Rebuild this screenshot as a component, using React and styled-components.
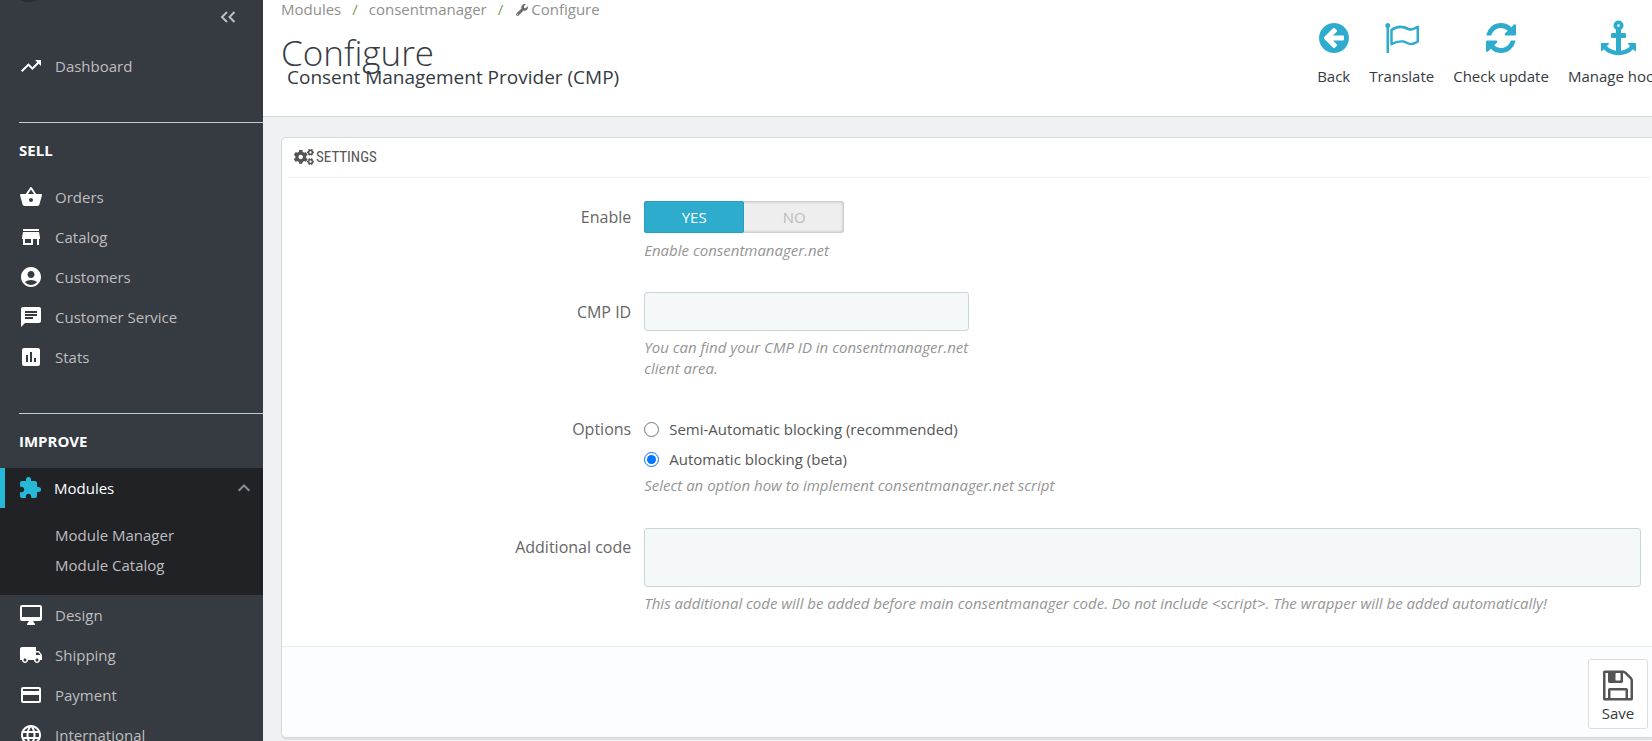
import React from "react";
import styled, { createGlobalStyle, css } from "styled-components";
import {
  MdTrendingUp,
  MdShoppingBasket,
  MdStore,
  MdAccountCircle,
  MdChat,
  MdAssessment,
  MdExtension,
  MdOutlineDesktopMac,
  MdLocalShipping,
  MdPayment,
  MdLanguage,
  MdKeyboardArrowUp,
} from "react-icons/md";
import { FaWrench, FaCogs } from "react-icons/fa";

const GlobalStyle = createGlobalStyle`
  *, *::before, *::after { box-sizing: border-box; }
  body {
    margin: 0;
    background: #eff1f2;
    color: #363a41;
    font-family: "Open Sans", "Noto Sans", sans-serif;
    font-size: 15px;
    line-height: 20px;
  }
`;

const Page = styled.div`
  display: flex;
  height: 100vh;
  overflow: hidden;
`;

/* Sidebar */

const Sidebar = styled.nav`
  flex: none;
  width: 263px;
  overflow: hidden;
  background: #363a41;
`;

const SidebarTop = styled.div`
  display: flex;
  justify-content: space-between;
  align-items: flex-start;
  height: 46px;
  padding: 0 27px 0 19px;
`;

const Avatar = styled.svg`
  display: block;
  width: 20px;
  height: 2px;
`;

const CollapseButton = styled.button`
  display: flex;
  margin: 11px 0 0;
  padding: 0;
  border: 0;
  background: none;
  color: #bebebe;
`;

const NavList = styled.ul`
  margin: 0;
  padding: 0;
  list-style: none;
`;

const NavLink = styled.a`
  display: flex;
  align-items: center;
  gap: 12px;
  height: 40px;
  padding: 0 7px 0 19px;
  color: #bebebe;
  text-decoration: none;

  svg {
    flex: none;
    width: 24px;
    height: 24px;
    color: #fff;
  }

  ${(p) =>
    p.$active &&
    css`
      padding-left: 13px;
      border-left: 5px solid #25b9d7;
      background: #202226;
      color: #fff;
      font-weight: 500;

      svg:first-child {
        color: #25b9d7;
      }
      svg:last-child {
        margin-left: auto;
        color: #8b9197;
      }
    `}
`;

const NavSection = styled.section`
  margin: 36px 0 0 19px;
  border-top: 1px solid #bbcdd2;
`;

const NavTitle = styled.h2`
  margin: 0;
  padding: 17px 0;
  color: #fff;
  font-size: 15px;
  line-height: 20px;
  font-weight: 700;
  text-transform: uppercase;
`;

const SubMenu = styled.ul`
  margin: 0;
  padding: 12px 0 15px 55px;
  background: #202226;
  list-style: none;
`;

const SubLink = styled.a`
  display: block;
  color: #bebebe;
  line-height: 30px;
  text-decoration: none;
`;

/* Header */

const Main = styled.main`
  flex: 1;
  min-width: 0;
  overflow: hidden;
`;

const Header = styled.header`
  display: flex;
  justify-content: space-between;
  height: 117px;
  padding-left: 18px;
  border-bottom: 1px solid #d3d8db;
  background: #fff;
`;

const Breadcrumb = styled.ol`
  display: flex;
  margin: 0;
  padding: 0;
  line-height: 18px;
  list-style: none;

  li + li::before {
    content: "/";
    margin: 0 11px;
    color: #72a35c;
  }
`;

const CrumbLink = styled.a`
  color: #8f8f8f;
  text-decoration: none;

  svg {
    width: 12px;
    height: 12px;
    margin: 0 3px -1px 2px;
    color: #6c6c6c;
  }
`;

const Title = styled.h1`
  margin: 21px 0 0;
  color: #363a41;
  font-size: 35px;
  line-height: 28px;
  font-weight: 300;
`;

const Subtitle = styled.h4`
  margin: 0 0 0 6px;
  font-size: 19px;
  line-height: 20px;
  font-weight: 400;
`;

const Toolbar = styled.div`
  display: flex;
  flex: none;
  gap: 19px;
  margin: 19px -18px 0 0;
`;

const ToolButton = styled.button`
  display: flex;
  flex-direction: column;
  align-items: center;
  align-self: flex-start;
  gap: 9px;
  padding: 0;
  border: 0;
  background: none;
  color: #363a41;
  font: inherit;
  white-space: nowrap;

  svg {
    height: 38px;
    color: #2eacce;
  }
`;

/* Settings panel */

const Panel = styled.form`
  margin: 20px -4px 0 18px;
  border: 1px solid #d3d8db;
  border-radius: 5px;
  background: #fff;
  box-shadow: 0 2px 0 rgba(0, 0, 0, 0.06);
`;

const PanelHeading = styled.h3`
  display: flex;
  align-items: center;
  gap: 2px;
  height: 40px;
  margin: 0 6px 23px;
  padding: 0 6px 2px;
  border-bottom: 1px solid #eee;
  color: #555;
  font-family: "Ubuntu Condensed", "Roboto Condensed", "Open Sans", sans-serif;
  font-size: 15px;
  font-weight: 400;
  text-transform: uppercase;

  svg {
    width: 20px;
    height: 18px;
  }
`;

const Row = styled.div`
  display: grid;
  grid-template-columns: 26% 1fr;
  padding: 0 14px 0 12px;
  margin-bottom: ${(p) => p.$space}px;
`;

const RowLabel = styled.label`
  padding: ${(p) => p.$top}px 13px 0 0;
  color: #666;
  font-size: 16px;
  line-height: 20px;
  text-align: right;
`;

const Help = styled.p`
  margin: ${(p) => p.$top}px 0 0;
  color: #959595;
  font-style: italic;
  line-height: 21px;
`;

const Switch = styled.div`
  display: flex;
  width: 200px;
  height: 32px;
  border-radius: 3px;
  background: #eee;
  box-shadow: inset 0 0 3px 1px rgba(0, 0, 0, 0.2);

  input {
    position: absolute;
    opacity: 0;
  }
`;

const SwitchLabel = styled.label`
  flex: 1;
  border-radius: 3px;
  color: #bbb;
  line-height: 32px;
  text-align: center;

  input:checked + & {
    background: #2eacce;
    box-shadow: inset 0 0 0 1px #2a9dbd;
    color: #fff;
    font-weight: 500;
  }
`;

const field = css`
  display: block;
  width: 100%;
  border: 1px solid #c7d6db;
  border-radius: 3px;
  background: #f5f8f9;
  font: inherit;
`;

const ShortColumn = styled.div`
  max-width: 325px;
`;

const TextInput = styled.input`
  ${field}
  height: 39px;
`;

const TextArea = styled.textarea`
  ${field}
  height: 59px;
  resize: none;
`;

const RadioRow = styled.label`
  display: flex;
  align-items: center;
  gap: 10px;
  height: 30px;
  color: #555;

  input {
    width: 15px;
    height: 15px;
    margin: 0;
    accent-color: #0075ff;
  }
`;

const PanelFooter = styled.footer`
  display: flex;
  justify-content: flex-end;
  height: 91px;
  padding: 12px 7px 8px;
  border-top: 1px solid #e6ebee;
  border-radius: 0 0 5px 5px;
  background: #fcfdfe;
`;

const SaveButton = styled.button`
  display: flex;
  flex-direction: column;
  align-items: center;
  justify-content: center;
  width: 60px;
  height: 70px;
  padding: 2px 0 0;
  border: 1px solid #ddd;
  border-radius: 3px;
  background: #fff;
  color: #363a41;
  font: inherit;

  svg {
    color: #555;
  }
`;

const Glyph = ({ box = "0 0 1536 1792", width = 30, height = 35, d }) => (
  <svg viewBox={box} width={width} height={height} fill="currentColor" aria-hidden="true">
    <path d={d} />
  </svg>
);

const BACK =
  "M1280 960v-128q0-26-19-45t-45-19h-502l189-189q19-19 19-45t-19-45l-91-91q-18-18-45-18t-45 18l-362 362-91 91q-18 18-18 45t18 45l91 91 362 362q18 18 45 18t45-18l91-91q18-18 18-45t-18-45l-189-189h502q26 0 45-19t19-45zm256-64q0 209-103 385.500t-279.500 279.500-385.500 103-385.500-103-279.500-279.500-103-385.500 103-385.500 279.500-279.500 385.500-103 385.500 103 279.500 279.500 103 385.500z";
const FLAG =
  "M1664 1054v-616q-169 91-306 91-82 0-145-32-100-49-184-76.500t-178-27.500q-173 0-403 127v599q245-113 433-113 55 0 103.500 7.500t98 26 77 31 82.500 39.500l28 14q44 22 101 22 120 0 293-92zm-1344-798q0 35-17.500 64t-46.500 46v1266q0 14-9 23t-23 9h-64q-14 0-23-9t-9-23v-1266q-29-17-46.500-46t-17.500-64q0-53 37.500-90.500t90.500-37.500 90.500 37.500 37.500 90.500zm1472 64v763q0 39-35 57-10 5-17 9-218 116-369 116-88 0-158-35l-28-14q-64-33-99-48t-91-29-114-14q-102 0-235.500 44t-228.500 102q-15 9-33 9-16 0-32-8-32-19-32-56v-742q0-35 31-55 35-21 78.500-42.500t114-52 152.500-49.500 155-19q112 0 209 31t209 86q38 19 89 19 122 0 310-112 22-12 31-17 31-16 62 2 31 20 31 55z";
const REFRESH =
  "M1511 1056q0 5-1 7-64 268-268 434.500t-478 166.500q-146 0-282.500-55t-243.500-157l-129 129q-19 19-45 19t-45-19-19-45v-448q0-26 19-45t45-19h448q26 0 45 19t19 45-19 45l-137 137q71 66 161 102t187 36q134 0 250-65t186-179q11-17 53-117 8-23 30-23h192q13 0 22.500 9.500t9.500 22.500zm25-800v448q0 26-19 45t-45 19h-448q-26 0-45-19t-19-45 19-45l138-138q-148-137-349-137-134 0-250 65t-186 179q-11 17-53 117-8 23-30 23h-199q-13 0-22.500-9.500t-9.500-22.500v-7q65-268 270-434.500t480-166.500q146 0 284 55.500t245 156.500l130-129q19-19 45-19t45 19 19 45z";
const ANCHOR =
  "M960 256q0-26-19-45t-45-19-45 19-19 45 19 45 45 19 45-19 19-45zm832 928v352q0 22-20 30-8 2-12 2-12 0-23-9l-93-93q-119 143-318.500 226.500t-429.500 83.500-429.500-83.500-318.500-226.500l-93 93q-9 9-23 9-4 0-12-2-20-8-20-30v-352q0-14 9-23t23-9h352q22 0 30 20 8 19-7 35l-100 100q67 91 189.500 153.500t271.500 82.500v-647h-192q-26 0-45-19t-19-45v-128q0-26 19-45t45-19h192v-163q-58-34-93-92.500t-35-128.500q0-106 75-181t181-75 181 75 75 181q0 70-35 128.500t-93 92.500v163h192q26 0 45 19t19 45v128q0 26-19 45t-45 19h-192v647q149-20 271.500-82.500t189.500-153.500l-100-100q-15-16-7-35 8-20 30-20h352q14 0 23 9t9 23z";
const FLOPPY =
  "M384 1536h768v-384h-768v384zM1280 1536h128v-896q0-14-10-38.500t-20-34.500l-281-281q-10-10-34-20t-39-10v416q0 40-28 68t-68 28h-576q-40 0-68-28t-28-68v-416h-128v1280h128v-416q0-40 28-68t68-28h832q40 0 68 28t28 68v416zM896 608v-320q0-13-9.500-22.500t-22.500-9.500h-192q-13 0-22.500 9.500t-9.500 22.500v320q0 13 9.500 22.500t22.500 9.500h192q13 0 22.500-9.500t9.500-22.500zM1536 640v928q0 40-28 68t-68 28h-1344q-40 0-68-28t-28-68v-1344q0-40 28-68t68-28h928q40 0 88 20t76 48l280 280q28 28 48 76t20 88z";

const sell = [
  ["Orders", MdShoppingBasket],
  ["Catalog", MdStore],
  ["Customers", MdAccountCircle],
  ["Customer Service", MdChat],
  ["Stats", MdAssessment],
];

const improve = [
  ["Design", MdOutlineDesktopMac],
  ["Shipping", MdLocalShipping],
  ["Payment", MdPayment],
  ["International", MdLanguage],
];

const tools = [
  ["Back", { d: BACK }],
  ["Translate", { d: FLAG, box: "0 0 1792 1792", width: 35 }],
  ["Check update", { d: REFRESH }],
  ["Manage hooks", { d: ANCHOR, box: "0 0 1792 1792", width: 35 }],
];

const NavItem = ({ label, icon: Icon }) => (
  <li>
    <NavLink href="#">
      <Icon />
      {label}
    </NavLink>
  </li>
);

export default function App() {
  return (
    <Page>
      <GlobalStyle />
      <Sidebar>
        <SidebarTop>
          <Avatar viewBox="0 0 20 2" aria-hidden="true">
            <path d="M1 0h18q-4 2-9 2t-9-2z" fill="#292c33" />
          </Avatar>
          <CollapseButton type="button" aria-label="Collapse menu">
            <svg width="16" height="12" viewBox="0 0 16 12" fill="none" stroke="currentColor" strokeWidth="2">
              <path d="M7 1 2 6l5 5M14.500 1l-5 5 5 5" />
            </svg>
          </CollapseButton>
        </SidebarTop>
        <NavList>
          <NavItem label="Dashboard" icon={MdTrendingUp} />
        </NavList>
        <NavSection>
          <NavTitle>Sell</NavTitle>
        </NavSection>
        <NavList>
          {sell.map(([label, icon]) => (
            <NavItem key={label} label={label} icon={icon} />
          ))}
        </NavList>
        <NavSection>
          <NavTitle>Improve</NavTitle>
        </NavSection>
        <NavList>
          <li>
            <NavLink href="#" $active>
              <MdExtension />
              Modules
              <MdKeyboardArrowUp />
            </NavLink>
            <SubMenu>
              <li>
                <SubLink href="#">Module Manager</SubLink>
              </li>
              <li>
                <SubLink href="#">Module Catalog</SubLink>
              </li>
            </SubMenu>
          </li>
          {improve.map(([label, icon]) => (
            <NavItem key={label} label={label} icon={icon} />
          ))}
        </NavList>
      </Sidebar>

      <Main>
        <Header>
          <div>
            <Breadcrumb>
              <li>
                <CrumbLink href="#">Modules</CrumbLink>
              </li>
              <li>
                <CrumbLink href="#">consentmanager</CrumbLink>
              </li>
              <li>
                <CrumbLink href="#">
                  <FaWrench />
                  Configure
                </CrumbLink>
              </li>
            </Breadcrumb>
            <Title>Configure</Title>
            <Subtitle>Consent Management Provider (CMP)</Subtitle>
          </div>
          <Toolbar>
            {tools.map(([label, glyph]) => (
              <ToolButton key={label} type="button">
                <Glyph {...glyph} />
                {label}
              </ToolButton>
            ))}
          </Toolbar>
        </Header>

        <Panel onSubmit={(e) => e.preventDefault()}>
          <PanelHeading>
            <FaCogs />
            Settings
          </PanelHeading>

          <Row $space={31}>
            <RowLabel as="span" id="enable-label" $top={6}>
              Enable
            </RowLabel>
            <div>
              <Switch role="radiogroup" aria-labelledby="enable-label">
                <input type="radio" name="enable" id="enable-yes" defaultChecked />
                <SwitchLabel htmlFor="enable-yes">YES</SwitchLabel>
                <input type="radio" name="enable" id="enable-no" />
                <SwitchLabel htmlFor="enable-no">NO</SwitchLabel>
              </Switch>
              <Help $top={7}>Enable consentmanager.net</Help>
            </div>
          </Row>

          <Row $space={35}>
            <RowLabel htmlFor="cmp-id" $top={10}>
              CMP ID
            </RowLabel>
            <ShortColumn>
              <TextInput id="cmp-id" type="text" />
              <Help $top={6}>You can find your CMP ID in consentmanager.net client area.</Help>
            </ShortColumn>
          </Row>

          <Row $space={32}>
            <RowLabel as="span" id="options-label" $top={5}>
              Options
            </RowLabel>
            <div role="radiogroup" aria-labelledby="options-label">
              <RadioRow>
                <input type="radio" name="blocking" />
                Semi-Automatic blocking (recommended)
              </RadioRow>
              <RadioRow>
                <input type="radio" name="blocking" defaultChecked />
                Automatic blocking (beta)
              </RadioRow>
              <Help $top={1}>Select an option how to implement consentmanager.net script</Help>
            </div>
          </Row>

          <Row $space={32}>
            <RowLabel htmlFor="additional-code" $top={9}>
              Additional code
            </RowLabel>
            <div>
              <TextArea id="additional-code" />
              <Help $top={6}>
                This additional code will be added before main consentmanager code. Do not include &lt;script&gt;. The
                wrapper will be added automatically!
              </Help>
            </div>
          </Row>

          <PanelFooter>
            <SaveButton type="submit">
              <Glyph d={FLOPPY} />
              Save
            </SaveButton>
          </PanelFooter>
        </Panel>
      </Main>
    </Page>
  );
}
